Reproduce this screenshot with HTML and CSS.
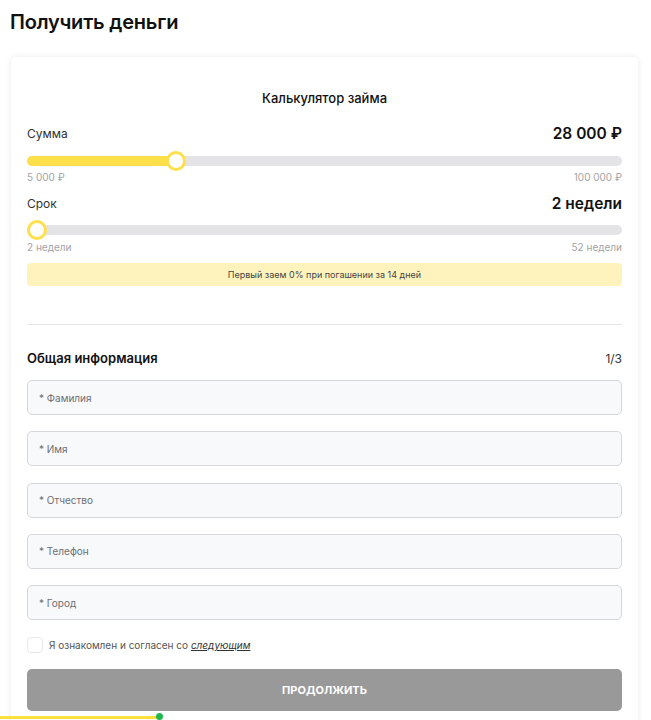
FILE: index.html
```html
<!DOCTYPE html>
<html lang="ru">
<head>
<meta charset="utf-8">
<title>Получить деньги</title>
<link rel="stylesheet" href="styles.css">
</head>
<body>
<div class="page">
  <h1 class="page-title">Получить деньги</h1>
  <div class="card">
    <div class="calc-title">Калькулятор займа</div>

    <div class="row row-first">
      <span class="row-label">Сумма</span>
      <span class="row-value">28 000 ₽</span>
    </div>
    <div class="slider">
      <div class="slider-fill" style="width: calc((100% - 20px) * 0.242 + 10px)"></div>
      <div class="slider-thumb" style="left: calc((100% - 20px) * 0.242)"></div>
    </div>
    <div class="range">
      <span>5 000 ₽</span>
      <span>100 000 ₽</span>
    </div>

    <div class="row row-second">
      <span class="row-label">Срок</span>
      <span class="row-value">2 недели</span>
    </div>
    <div class="slider slider-second">
      <div class="slider-fill" style="width: 10px"></div>
      <div class="slider-thumb" style="left: 0"></div>
    </div>
    <div class="range">
      <span>2 недели</span>
      <span>52 недели</span>
    </div>

    <div class="notice">Первый заем 0% при погашении за 14 дней</div>

    <hr class="divider">

    <div class="section-head">
      <span class="section-title">Общая информация</span>
      <span class="section-step">1/3</span>
    </div>

    <div class="fields">
      <div class="field">* Фамилия</div>
      <div class="field">* Имя</div>
      <div class="field">* Отчество</div>
      <div class="field">* Телефон</div>
      <div class="field">* Город</div>
    </div>

    <label class="agree">
      <span class="checkbox"></span>
      <span class="agree-text">Я ознакомлен и согласен со <a href="#" class="agree-link">следующим</a></span>
    </label>

    <button class="submit" type="button">ПРОДОЛЖИТЬ</button>
  </div>
</div>
<div class="progress"><span class="progress-dot"></span></div>
</body>
</html>
```

FILE: styles.css
```css
* { box-sizing: border-box; }
html, body { margin: 0; padding: 0; background: #fff; }
body {
  font-family: Inter, "Noto Sans", "DejaVu Sans", sans-serif;
  color: #1d1d1f;
  overflow: hidden;
}
.page { padding: 0 13px 0 11px; }
.page-title {
  margin: 0 0 0 -1px;
  padding-top: 10px;
  font-size: 20px;
  line-height: 24px;
  font-weight: 600;
  letter-spacing: -0.2px;
  color: #111;
}
.card {
  margin-top: 23px;
  background: #fff;
  border-radius: 5px;
  box-shadow: 0 0 6px rgba(0,0,0,0.09);
  padding: 33px 16px 40px;
}
.calc-title {
  text-align: center;
  font-size: 13px;
  line-height: 16px;
  font-weight: 500;
  color: #111;
}
.row {
  display: flex;
  justify-content: space-between;
  align-items: center;
  height: 20px;
}
.row-first { margin-top: 17px; }
.row-label { font-size: 12px; color: #333; }
.row-value { font-size: 15.5px; font-weight: 600; color: #111; }
.slider {
  position: relative;
  height: 10px;
  background: #e4e4e6;
  border-radius: 5px;
  margin-top: 13px;
}
.slider-second { margin-top: 12px; }
.slider-fill {
  height: 100%;
  background: #ffe04a;
  border-radius: 5px;
}
.slider-thumb {
  position: absolute;
  top: 50%;
  width: 20px;
  height: 20px;
  margin-top: -10px;
  border-radius: 50%;
  background: #fff;
  border: 3px solid #ffdf4c;
}
.range {
  display: flex;
  justify-content: space-between;
  font-size: 10px;
  line-height: 12px;
  color: #a3a3a6;
  margin-top: 5px;
}
.slider-second + .range { margin-top: 6px; }
.range + .row { margin-top: 10px; }
.notice {
  margin-top: 10px;
  height: 23px;
  line-height: 23px;
  background: #fff3bd;
  border-radius: 4px;
  text-align: center;
  font-size: 9px;
  color: #444;
}
.divider {
  margin: 38px 0 0;
  border: 0;
  border-top: 1px solid #e6e6e8;
}
.section-head {
  margin-top: 25px;
  display: flex;
  justify-content: space-between;
  align-items: center;
  height: 16px;
}
.section-title { font-size: 13px; font-weight: 600; color: #111; }
.section-step { font-size: 12px; color: #333; }
.fields {
  margin-top: 14px;
  display: flex;
  flex-direction: column;
  gap: 16.25px;
}
.field {
  height: 35px;
  border: 1px solid #d6d7db;
  border-radius: 5px;
  background: #f8f9fb;
  padding: 0 11px;
  display: flex;
  align-items: center;
  font-size: 10px;
  color: #6e6e72;
}
.agree {
  margin-top: 17px;
  display: flex;
  align-items: center;
  gap: 6px;
  height: 16px;
}
.checkbox {
  width: 16px;
  height: 16px;
  border: 1px solid #e8e8ea;
  border-radius: 4px;
  background: #fff;
}
.agree-text { font-size: 10px; color: #555; }
.agree-link { color: #333; font-style: italic; text-decoration: underline; }
.submit {
  display: block;
  width: 100%;
  margin-top: 16px;
  height: 42px;
  border: 0;
  border-radius: 5px;
  background: #9a9999;
  color: #fff;
  font-family: inherit;
  font-size: 11px;
  font-weight: 700;
  letter-spacing: 0;
}
.progress {
  position: fixed;
  left: 0;
  bottom: 1px;
  width: 158px;
  height: 3px;
  background: #ffdf3a;
}
.progress-dot {
  position: absolute;
  right: -5px;
  top: -3px;
  width: 7px;
  height: 7px;
  border-radius: 50%;
  background: #1fb84f;
}
```
